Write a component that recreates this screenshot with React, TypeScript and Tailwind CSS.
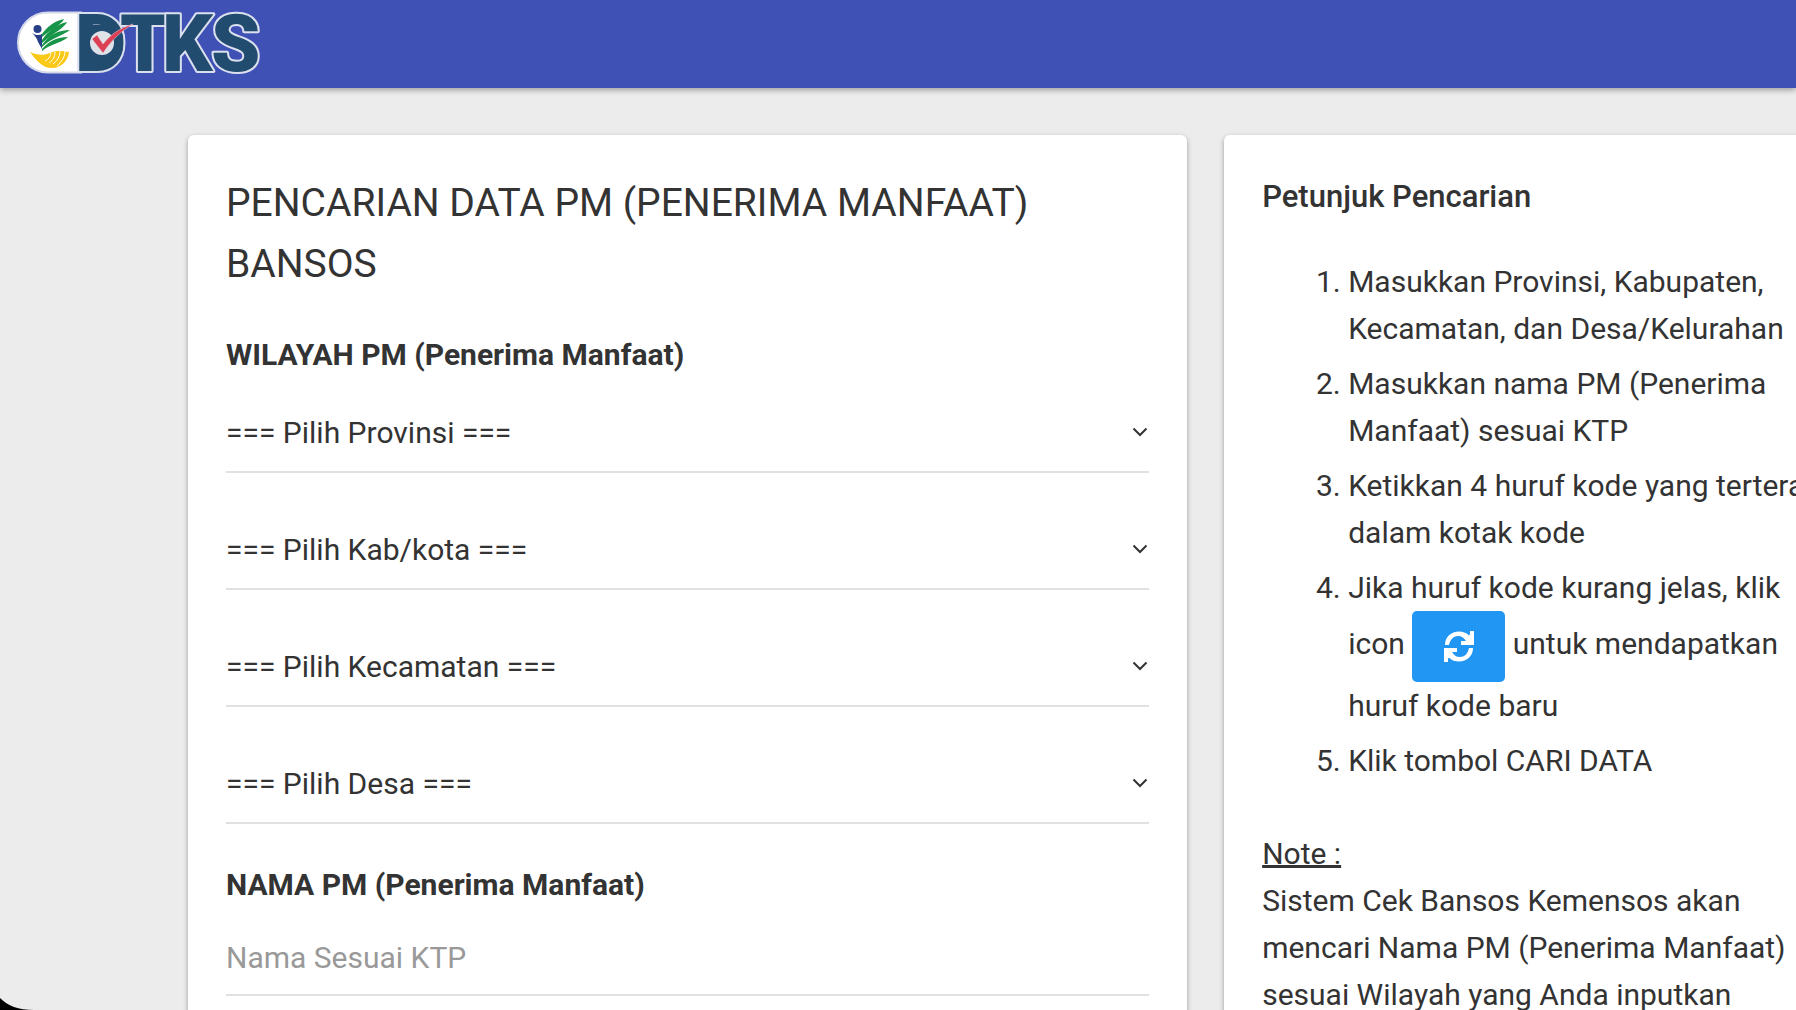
import React from 'react';

const wilayah = [
  { id: 'provinsi', label: 'Provinsi' },
  { id: 'kabupaten', label: 'Kab/kota' },
  { id: 'kecamatan', label: 'Kecamatan' },
  { id: 'desa', label: 'Desa' },
];

const Logo = () => (
  <svg viewBox="-2 0 252 70" className="h-[70px] w-[252px]" role="img" aria-label="DTKS">
    {/* White pill behind the emblem */}
    <path d="M62 4.500H29a30 30 0 0 0 0 60h33z" fill="#fff" stroke="#d5daea" strokeWidth="2" />

    {/* Letters with a light rim */}
    <g
      fontFamily="Roboto, sans-serif"
      fontWeight="900"
      fontSize="79"
      fill="#224b70"
      stroke="#dbe0ef"
      strokeWidth="4"
      strokeLinejoin="round"
      paintOrder="stroke"
    >
      <text x="101" y="63">T</text>
      <text x="56" y="63">D</text>
      <text x="143" y="63">K</text>
      <text x="192" y="63">S</text>
    </g>

    {/* Check mark */}
    <path d="M70 17h18l10 8v20l-10 8H70z" fill="#224b70" />
    <circle cx="83" cy="35" r="12" fill="#dfe2e9" />
    <path d="M73 31l5-4 6 9c8-10 17-16 30-20-13 8-21 16-30 29z" fill="#dc4055" stroke="#e9ccd5" strokeWidth="0.5" />

    {/* Emblem */}
    <g transform="translate(-3 1)">
      <circle cx="21.500" cy="20" r="4" fill="#263f87" />
      <path d="M16 24c3 2 7 3 10 1v15l-4-7c-1-4-3-6-6-9z" fill="#263f87" />
      <g fill="#169447">
        <path d="M26 25c5-7 12-13 22-15-3 6-11 9-22 18z" />
        <path d="M26 31c6-9 15-16 25-18-3 6-12 10-25 21z" />
        <path d="M26 36c7-10 16-15 28-15-6 5-17 7-28 17z" />
        <path d="M26 40c7-8 15-12 26-12-6 6-16 6-26 14z" />
      </g>
      <path d="M14 43c7 3 13 4 20 1 6-3 12-2 19-1-1 9-8 16-17 16-10 0-16-8-22-16z" fill="#fac816" />
      <g fill="none" stroke="#fff" strokeWidth="1">
        <path d="M35 44c-1 4-2 6-6 8" />
        <path d="M39 43c0 5-2 8-6 11" />
        <path d="M44 42c0 6-3 10-7 13" />
        <path d="M49 42c0 6-3 10-8 15" />
      </g>
    </g>
  </svg>
);

const SelectField = ({ id, label }: { id: string; label: string }) => (
  <div className="relative border-b-2 border-[#e1e1e1]">
    <select
      id={id}
      aria-label={label}
      className="block h-[77px] w-full appearance-none bg-transparent text-[30px] leading-[47px] outline-none"
    >
      <option>{`=== Pilih ${label} ===`}</option>
    </select>
    <svg
      viewBox="0 0 16 10"
      className="pointer-events-none absolute right-px top-[33px] h-2.5 w-4"
      fill="none"
      stroke="#333"
      strokeWidth="2"
    >
      <path d="M1.500 1.500 8 8l6.500-6.500" />
    </svg>
  </div>
);

const RefreshIcon = () => (
  <svg viewBox="0 0 30 31" className="h-[31px] w-[30px]" fill="#fff">
    <path d="M1 14C1 6 7 .500 15 .500c4 0 7 1 10 4L26 3V0h4v14H17v-4h5c-2-3-4-5-8-5-5 0-8 4-9 9z" />
    <path
      d="M1 14C1 6 7 .500 15 .500c4 0 7 1 10 4L26 3V0h4v14H17v-4h5c-2-3-4-5-8-5-5 0-8 4-9 9z"
      transform="rotate(180 15 15.500)"
    />
  </svg>
);

export default function App() {
  return (
    <div className="relative flex h-screen flex-col overflow-hidden bg-[#ececec] font-['Roboto',sans-serif] text-[30px] leading-[47px] text-[#333]">
      <header className="flex h-[88px] shrink-0 items-start bg-[#3f51b5] px-[17px] pt-2 shadow-[0_2px_6px_rgba(0,0,0,0.35)]">
        <Logo />
      </header>

      <main className="-mr-16 grid grow grid-cols-[11fr_7fr] gap-[37px] pl-[188px] pt-[47px]">
        <section className="rounded-md bg-white px-[38px] pt-[38px] shadow-[0_2px_5px_rgba(0,0,0,0.35)]">
          <h1 className="text-[39px] leading-[61px]">
            PENCARIAN DATA PM (PENERIMA MANFAAT) BANSOS
          </h1>

          <h2 className="mt-9 font-bold">WILAYAH PM (Penerima Manfaat)</h2>
          <div className="mt-4 flex flex-col gap-[38px]">
            {wilayah.map((item) => (
              <SelectField key={item.id} id={item.id} label={item.label} />
            ))}
          </div>

          <label htmlFor="nama" className="mt-[37px] block font-bold">NAMA PM (Penerima Manfaat)</label>
          <input
            id="nama"
            type="text"
            placeholder="Nama Sesuai KTP"
            className="mt-3 block h-[76px] w-full border-b-2 border-[#e1e1e1] bg-transparent outline-none placeholder:text-[#999]"
          />
        </section>

        <aside className="rounded-md bg-white px-[38px] pt-[38px] shadow-[0_2px_5px_rgba(0,0,0,0.35)]">
          <h2 className="text-[31px] font-medium">Petunjuk Pencarian</h2>

          <ol className="mt-[38px] flex list-decimal flex-col gap-2 pl-[86px]">
            <li>Masukkan Provinsi, Kabupaten, Kecamatan, dan Desa/Kelurahan</li>
            <li>Masukkan nama PM (Penerima Manfaat) sesuai KTP</li>
            <li>Ketikkan 4 huruf kode yang tertera dalam kotak kode</li>
            <li>
              Jika huruf kode kurang jelas, klik icon{' '}
              <button
                type="button"
                aria-label="Refresh kode"
                className="inline-flex h-[71px] w-[93px] items-center justify-center rounded-[5px] bg-[#2196f3] align-middle"
              >
                <RefreshIcon />
              </button>{' '}
              untuk mendapatkan huruf kode baru
            </li>
            <li>Klik tombol CARI DATA</li>
          </ol>

          <p className="mt-[46px]">
            <u className="underline-offset-1">Note :</u>
            <br />
            Sistem Cek Bansos Kemensos akan mencari Nama PM (Penerima Manfaat) sesuai Wilayah yang Anda inputkan
          </p>
        </aside>
      </main>

      {/* Rounded screen corner */}
      <svg viewBox="0 0 34 12" className="absolute bottom-0 left-0 h-3 w-[34px]">
        <path d="M0 0c8 8 18 12 34 12H0z" fill="#000" />
      </svg>
    </div>
  );
}
